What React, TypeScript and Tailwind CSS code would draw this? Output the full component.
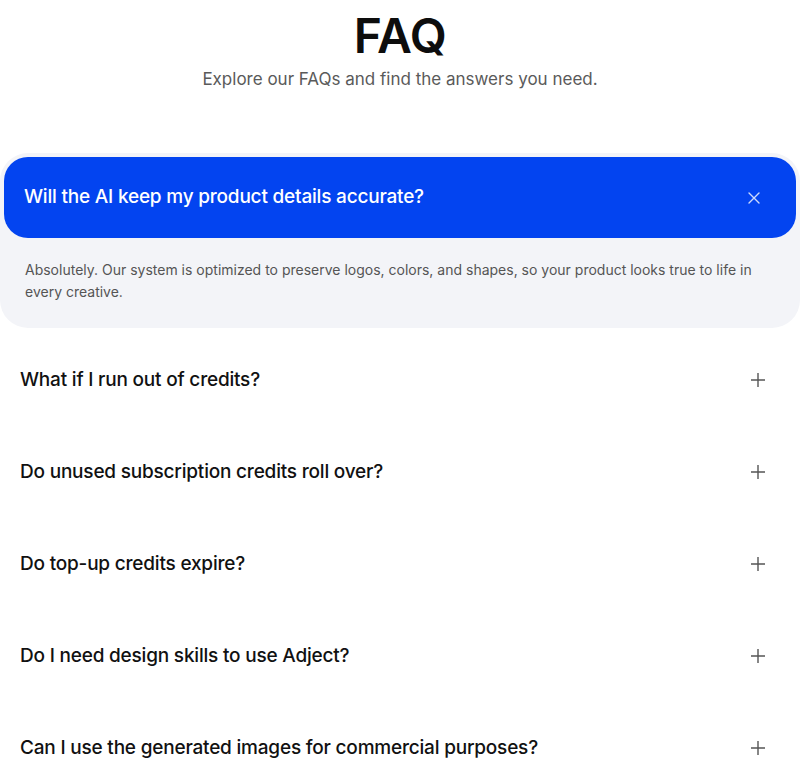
import { useState } from "react";

type Faq = {
  question: string;
  answer: string;
};

const faqs: Faq[] = [
  {
    question: "Will the AI keep my product details accurate?",
    answer:
      "Absolutely. Our system is optimized to preserve logos, colors, and shapes, so your product looks true to life in every creative.",
  },
  {
    question: "What if I run out of credits?",
    answer: "You can buy a top-up pack at any time and keep generating right away.",
  },
  {
    question: "Do unused subscription credits roll over?",
    answer: "Subscription credits reset at the start of each billing cycle.",
  },
  {
    question: "Do top-up credits expire?",
    answer: "No. Top-up credits stay on your account until you use them.",
  },
  {
    question: "Do I need design skills to use Adject?",
    answer: "Not at all. Upload a product photo and pick a style, we handle the rest.",
  },
  {
    question: "Can I use the generated images for commercial purposes?",
    answer: "Yes, every image you generate can be used in ads, stores and social posts.",
  },
];

function CloseIcon() {
  return (
    <svg width="14" height="14" viewBox="0 0 14 14" fill="none" stroke="currentColor" strokeWidth="1.4" strokeLinecap="round">
      <path d="M2 2l10 10M12 2L2 12" />
    </svg>
  );
}

function PlusIcon() {
  return (
    <svg width="16" height="16" viewBox="0 0 16 16" fill="none" stroke="currentColor" strokeWidth="1.4">
      <path d="M8 1v14M1 8h14" />
    </svg>
  );
}

export default function App() {
  const [open, setOpen] = useState(0);

  return (
    <main className="min-h-screen bg-white font-['Inter',sans-serif] text-[#111]">
      <header className="flex flex-col items-center pt-[10px]">
        <h1 className="text-[48px] font-semibold leading-[52px] tracking-[-0.5px] text-[#0d0d0d]">FAQ</h1>
        <p className="mt-[5px] text-[17px] leading-6 text-[#5a5a5a]">Explore our FAQs and find the answers you need.</p>
      </header>

      <div className="mt-[62px] flex flex-col">
        {faqs.map((faq, i) =>
          i === open ? (
            <div key={faq.question} className="mb-[6px] rounded-[28px] bg-[#f3f4f8] p-[4px] pb-0">
              <button
                type="button"
                onClick={() => setOpen(-1)}
                className="flex h-[81px] w-full items-center justify-between rounded-[24px] bg-[#0344f0] pl-[20px] pr-[35px] text-left"
              >
                <span className="text-[19px] font-medium tracking-[-0.2px] text-white">{faq.question}</span>
                <span className="text-white/80">
                  <CloseIcon />
                </span>
              </button>
              <p className="px-[21px] pb-[25px] pt-[21px] text-[14px] leading-[22px] text-[#555]">{faq.answer}</p>
            </div>
          ) : (
            <button
              key={faq.question}
              type="button"
              onClick={() => setOpen(i)}
              className="flex h-[92px] w-full items-center justify-between pl-[20px] pr-[34px] text-left"
            >
              <span className="text-[19px] font-medium tracking-[-0.2px] text-[#111]">{faq.question}</span>
              <span className="text-[#555]">
                <PlusIcon />
              </span>
            </button>
          )
        )}
      </div>
    </main>
  );
}
